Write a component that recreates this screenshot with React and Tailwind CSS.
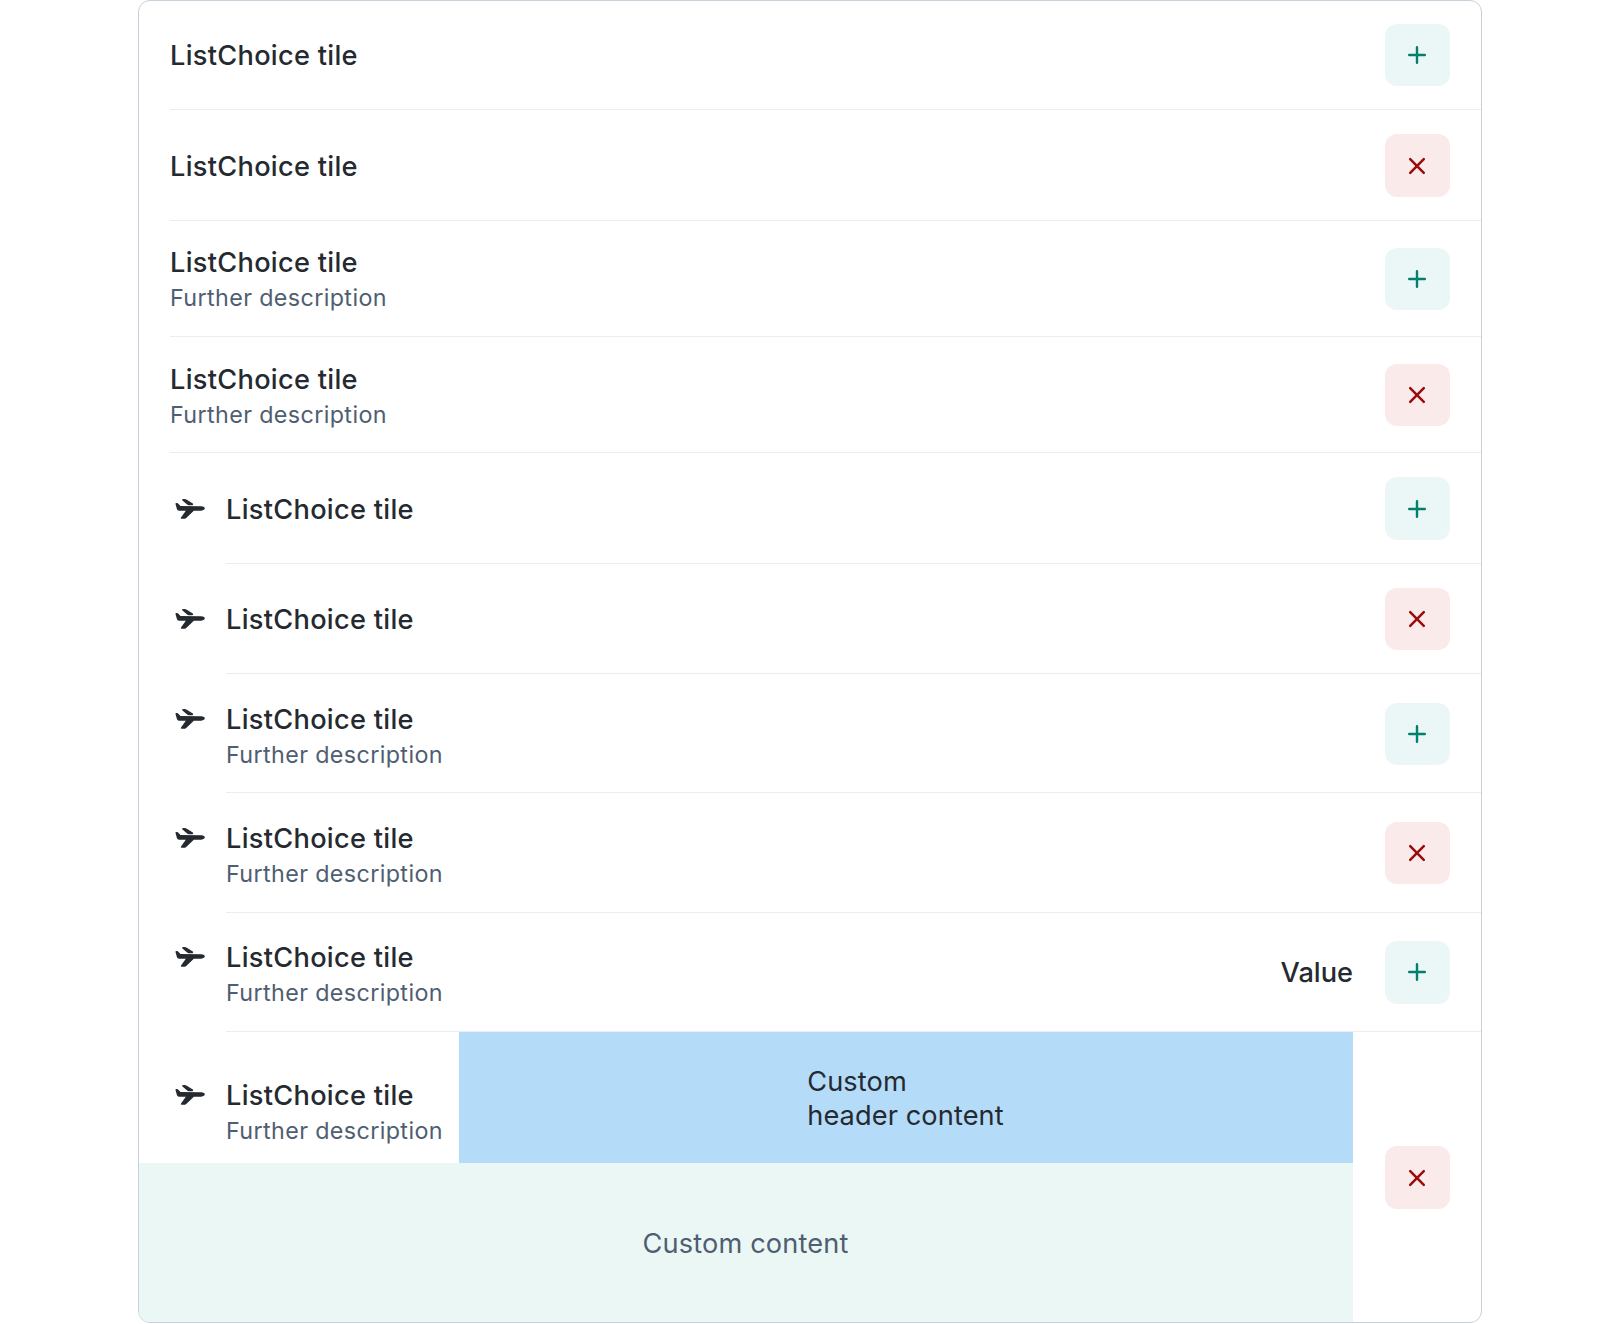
import React from "react";

function PlaneIcon() {
  return (
    <svg width="32" height="24" viewBox="-1.500 0 96 72" className="block" fill="#252a31">
      <path d="M3 21 Q2 18 6 18 Q10 17.500 13 22 L18 27 L80 27.500 Q91 28.500 91 34 Q91 39.500 80 41 L58 41.500 L36 62 Q32 65.500 28 65.500 L21 65.500 Q17 65 20 61 L34 41 L14 41 Q8 40.500 7 35 Z" />
      <path d="M23 9.500 Q21 6 28 6 Q33 5.500 37 8 L55 19.500 Q58 23 54 25 L43 25 Q40 24.500 37 21.500 Z" />
    </svg>
  );
}

function PlusIcon() {
  return (
    <svg width="20" height="20" viewBox="0 0 20 20" className="block" stroke="#007f6d" strokeWidth="2.4" strokeLinecap="round">
      <path d="M10 2.200v15.600M2.200 10h15.600" />
    </svg>
  );
}

function CloseIcon() {
  return (
    <svg width="20" height="20" viewBox="0 0 20 20" className="block" stroke="#970c0c" strokeWidth="2.5" strokeLinecap="round">
      <path d="M3.200 3.200l13.600 13.600M16.800 3.200L3.200 16.800" />
    </svg>
  );
}

function ActionButton({ remove, className }) {
  return (
    <button
      type="button"
      aria-label={remove ? "Remove" : "Add"}
      className={`flex w-[65px] shrink-0 items-center justify-center rounded-[12px] pr-px ${remove ? "bg-[#faeaea]" : "bg-[#ebf7f7]"} ${className}`}
    >
      {remove ? <CloseIcon /> : <PlusIcon />}
    </button>
  );
}

function Label({ description }) {
  return (
    <div>
      <div className="text-[27.2px] leading-[34px] font-medium tracking-[0.29px] whitespace-nowrap text-[#252a31]">ListChoice tile</div>
      {description && (
        <div className="pt-px text-[23.3px] leading-[34px] tracking-[0.38px] whitespace-nowrap text-[#4f5e71]">Further description</div>
      )}
    </div>
  );
}

function Tile({ icon, description, remove, value, height, text, button }) {
  return (
    <div className={`flex pl-[31px] ${height}`}>
      {icon && (
        <div className={`w-[56px] shrink-0 pl-[4px] ${text}`}>
          <div className="pt-[4px]">
            <PlaneIcon />
          </div>
        </div>
      )}
      <div className="flex flex-1 border-b border-[#e8edf1] pr-[31px]">
        <div className={`flex-1 ${text}`}>
          <Label description={description} />
        </div>
        {value && <div className="mt-[43px] mr-[32px] text-[27.2px] leading-[34px] font-medium text-[#252a31]">{value}</div>}
        <ActionButton remove={remove} className={button} />
      </div>
    </div>
  );
}

const tiles = [
  { height: "h-[109px]", text: "pt-[38px]", button: "mt-[23px] h-[62px]" },
  { remove: true, height: "h-[111px]", text: "pt-[40px]", button: "mt-[24px] h-[63px] pt-px" },
  { description: true, height: "h-[116px]", text: "pt-[25px]", button: "mt-[27px] h-[62px]" },
  { description: true, remove: true, height: "h-[116px]", text: "pt-[26px]", button: "mt-[27px] h-[62px]" },
  { icon: true, height: "h-[111px]", text: "pt-[40px]", button: "mt-[24px] h-[63px] pt-px" },
  { icon: true, remove: true, height: "h-[110px]", text: "pt-[39px]", button: "mt-[24px] h-[62px]" },
  { icon: true, description: true, height: "h-[119px]", text: "pt-[29px]", button: "mt-[29px] h-[62px]" },
  { icon: true, description: true, remove: true, height: "h-[120px]", text: "pt-[29px]", button: "mt-[29px] h-[62px]" },
  { icon: true, description: true, value: "Value", height: "h-[119px]", text: "pt-[28px]", button: "mt-[28px] h-[63px] pb-px" },
];

export default function App() {
  return (
    <div className="h-[1324px] bg-white pl-[138px] font-['Inter',sans-serif]">
      <div className="h-[1323px] w-[1344px] overflow-hidden rounded-[12px] border border-[#c6d1db]">
        {tiles.map((tile, i) => (
          <Tile key={i} {...tile} />
        ))}
        <div className="flex h-[290px]">
          <div className="flex w-[1214px] flex-col">
            <div className="flex h-[131px]">
              <div className="flex w-[320px] pt-[47px] pl-[31px]">
                <div className="w-[56px] shrink-0 pt-[4px] pl-[4px]">
                  <PlaneIcon />
                </div>
                <Label description />
              </div>
              <div className="flex flex-1 justify-center bg-[#b4dbf8] pt-[33px] pr-px">
                <div className="text-[27.2px] leading-[34px] tracking-[0.1px] text-[#252a31]">
                  Custom
                  <br />
                  header content
                </div>
              </div>
            </div>
            <div className="flex flex-1 items-center justify-center bg-[#ebf7f5] pt-[2px] pr-px text-[27.2px] leading-[34px] tracking-[0.13px] text-[#4f5e71]">
              Custom content
            </div>
          </div>
          <ActionButton remove className="mt-[114px] ml-[32px] h-[63px] pt-px" />
        </div>
      </div>
    </div>
  );
}
